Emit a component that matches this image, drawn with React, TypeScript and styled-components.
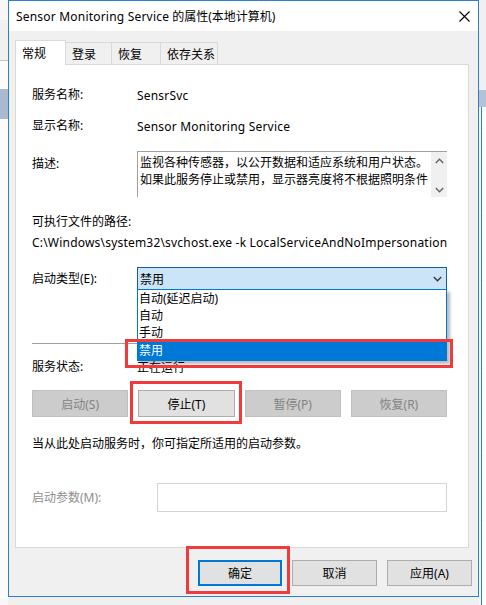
import React from 'react'
import styled, { createGlobalStyle } from 'styled-components'

const GlobalStyle = createGlobalStyle`
  html, body {
    margin: 0;
    padding: 0;
    background: #f0f0f0;
  }
  body {
    font-family: "Noto Sans", "Noto Sans CJK SC", sans-serif;
    font-size: 12px;
    color: #000;
  }
`

const Desktop = styled.div`
  display: flex;
  width: 486px;
  height: 605px;
  overflow: hidden;
  background: #f0f0f0;
`

const Strip = styled.div<{ $w?: number }>`
  display: flex;
  flex-direction: column;
  width: ${p => (p.$w ? `${p.$w}px` : 'auto')};
  flex: ${p => (p.$w ? 'none' : '1')};
  background: #f7f7f7;
  overflow: hidden;
`

const StripPart = styled.div<{ $h: number; $bg: string; $line?: boolean }>`
  height: ${p => p.$h}px;
  flex-shrink: 0;
  background: ${p => p.$bg};
  border-bottom: ${p => (p.$line ? '1px solid #c8c8c8' : 'none')};
`

const ListRows = styled.div`
  display: flex;
  flex-direction: column;
  background: #fff;
  flex: 1;
  border-left: 1px solid #2b7fd0;
  margin-left: 2px;
`

const ListCell = styled.div`
  height: 21.8px;
  flex-shrink: 0;
  border-bottom: 1px solid #fafafa;
  box-sizing: border-box;
`

const Window = styled.div`
  position: relative;
  width: 471px;
  height: 597px;
  box-sizing: border-box;
  border: 1px solid #2b7fd0;
  background: #f0f0f0;
  display: flex;
  flex-direction: column;
  flex-shrink: 0;
`

const TitleBar = styled.div`
  height: 30px;
  background: #fff;
  display: flex;
  align-items: center;
  justify-content: space-between;
  padding-left: 7px;
`

const Title = styled.div`
  font-size: 12px;
  white-space: nowrap;
`

const Latin = styled.span`
  letter-spacing: 0.2px;
`

const CloseBox = styled.div`
  width: 28px;
  height: 30px;
  display: flex;
  align-items: center;
  justify-content: center;
`

const Body = styled.div`
  flex: 1;
  display: flex;
  flex-direction: column;
  padding: 9px 8px 0 6px;
`

const TabRow = styled.div`
  display: flex;
  align-items: flex-end;
  height: 24px;
`

const Tab = styled.div<{ $active?: boolean; $w: number }>`
  position: relative;
  z-index: ${p => (p.$active ? 2 : 1)};
  box-sizing: border-box;
  width: ${p => p.$w}px;
  height: ${p => (p.$active ? 25 : 22)}px;
  margin-bottom: ${p => (p.$active ? -1 : 0)}px;
  margin-left: ${p => (p.$active ? 0 : -1)}px;
  padding-left: 6px;
  background: ${p => (p.$active ? '#fff' : '#f0f0f0')};
  border: 1px solid #d9d9d9;
  border-bottom: none;
  display: flex;
  align-items: center;
`

const Panel = styled.div`
  position: relative;
  width: 454px;
  height: 484px;
  box-sizing: border-box;
  border: 1px solid #d9d9d9;
  background: #fff;
  padding: 0 21px 0 16px;
  display: flex;
  flex-direction: column;
`

const Row = styled.div<{ $mt: number; $h: number; $top?: boolean }>`
  display: flex;
  align-items: ${p => (p.$top ? 'flex-start' : 'center')};
  margin-top: ${p => p.$mt}px;
  height: ${p => p.$h}px;
  white-space: nowrap;
`

const Label = styled.div<{ $w?: number; $muted?: boolean; $pt?: number }>`
  width: ${p => p.$w ?? 105}px;
  flex-shrink: 0;
  color: ${p => (p.$muted ? '#8d8d8d' : '#000')};
  padding-top: ${p => p.$pt ?? 0}px;
  line-height: 18px;
`

const DescBox = styled.div`
  width: 310px;
  height: 46px;
  box-sizing: border-box;
  border-top: 1px solid #a0a0a0;
  border-left: 1px solid #a0a0a0;
  display: flex;
`

const DescText = styled.div`
  flex: 1;
  padding: 2px 0 0 2px;
  line-height: 17px;
  overflow: hidden;
`

const ScrollBar = styled.div`
  width: 16px;
  background: #f0f0f0;
  display: flex;
  flex-direction: column;
  justify-content: space-between;
  align-items: center;
  padding: 6px 0 4px;
`

const SelectWrap = styled.div`
  position: relative;
  width: 310px;
  height: 23px;
  box-sizing: border-box;
  border: 1px solid #0a5fa8;
  background: #cce4f7;
  display: flex;
  align-items: center;
  justify-content: space-between;
  padding: 0 4px 0 2px;
`

const Dropdown = styled.div`
  position: absolute;
  left: -1px;
  right: -1px;
  top: 21px;
  box-sizing: border-box;
  border: 1px solid #0078d7;
  background: #fff;
  box-shadow: 3px 3px 3px rgba(0, 0, 0, 0.28);
  z-index: 5;
`

const Option = styled.div<{ $selected?: boolean }>`
  height: ${p => (p.$selected ? 19 : 17)}px;
  line-height: ${p => (p.$selected ? 19 : 17)}px;
  padding-left: 1px;
  background: ${p => (p.$selected ? '#0078d7' : 'transparent')};
  color: ${p => (p.$selected ? '#fff' : '#000')};
`

const Separator = styled.div<{ $mt: number }>`
  margin-top: ${p => p.$mt}px;
  height: 1px;
  background: #a0a0a0;
`

const ButtonGrid = styled.div`
  display: grid;
  grid-template-columns: repeat(4, 1fr);
  column-gap: 10px;
  margin-top: 14px;
  height: 27px;
`

const PushButton = styled.div<{ $disabled?: boolean; $primary?: boolean; $w?: number }>`
  box-sizing: border-box;
  width: ${p => (p.$w ? `${p.$w}px` : 'auto')};
  height: 100%;
  display: flex;
  align-items: center;
  justify-content: center;
  background: ${p => (p.$disabled ? '#cccccc' : '#e1e1e1')};
  color: ${p => (p.$disabled ? '#838383' : '#000')};
  border: ${p =>
    p.$primary ? '2px solid #0078d7' : p.$disabled ? '1px solid #bfbfbf' : '1px solid #adadad'};
`

const ParamInput = styled.div`
  width: 290px;
  height: 29px;
  box-sizing: border-box;
  border: 1px solid #d4d4d4;
  background: #fff;
`

const ButtonBar = styled.div`
  display: flex;
  justify-content: flex-end;
  gap: 10px;
  margin-top: 12px;
  margin-right: -2px;
  height: 26px;
`

const Mark = styled.div<{ $x: number; $y: number; $w: number; $h: number }>`
  position: absolute;
  left: ${p => p.$x}px;
  top: ${p => p.$y}px;
  width: ${p => p.$w}px;
  height: ${p => p.$h}px;
  box-sizing: border-box;
  border: 3px solid #ef3b3b;
  z-index: 10;
  pointer-events: none;
`

const Chevron = ({ up, color = '#333' }: { up?: boolean; color?: string }) => (
  <svg width="9" height="6" viewBox="0 0 9 6">
    <path
      d={up ? 'M0.8 5 L4.5 1.2 L8.2 5' : 'M0.8 1 L4.5 4.8 L8.2 1'}
      fill="none"
      stroke={color}
      strokeWidth="1.3"
    />
  </svg>
)

const CloseIcon = () => (
  <svg width="11" height="11" viewBox="0 0 11 11">
    <path d="M0.5 0.5 L10.5 10.5 M10.5 0.5 L0.5 10.5" stroke="#000" strokeWidth="1.1" />
  </svg>
)

export default function App() {
  const rightRows = Array.from({ length: 22 }, (_, i) => i)

  return (
    <>
      <GlobalStyle />
      <Desktop>
        <Strip $w={8}>
          <StripPart $h={20} $bg="#f7f7f7" />
          <StripPart $h={40} $bg="#f0f0f0" $line />
          <StripPart $h={28} $bg="#fbfbfb" />
          <StripPart $h={30} $bg="#a9bad0" />
          <StripPart $h={480} $bg="#fbfbfb" />
        </Strip>

        <Window>
          <TitleBar>
            <Title>
              <Latin>Sensor Monitoring Service</Latin> 的属性(本地计算机)
            </Title>
            <CloseBox>
              <CloseIcon />
            </CloseBox>
          </TitleBar>

          <Body>
            <TabRow>
              <Tab $active $w={51}>常规</Tab>
              <Tab $w={47}>登录</Tab>
              <Tab $w={50}>恢复</Tab>
              <Tab $w={58}>依存关系</Tab>
            </TabRow>

            <Panel>
              <Row $mt={21} $h={18}>
                <Label>服务名称:</Label>
                <Latin>SensrSvc</Latin>
              </Row>
              <Row $mt={13} $h={18}>
                <Label>显示名称:</Label>
                <Latin>Sensor Monitoring Service</Latin>
              </Row>
              <Row $mt={16} $h={46} $top>
                <Label $pt={4}>描述:</Label>
                <DescBox>
                  <DescText>
                    监视各种传感器，以公开数据和适应系统和用户状态。
                    <br />
                    如果此服务停止或禁用，显示器亮度将不根据照明条件
                  </DescText>
                  <ScrollBar>
                    <Chevron up color="#606060" />
                    <Chevron color="#606060" />
                  </ScrollBar>
                </DescBox>
              </Row>
              <Row $mt={16} $h={18}>
                <Label $w={200}>可执行文件的路径:</Label>
              </Row>
              <Row $mt={2} $h={18}>
                <Latin>C:\Windows\system32\svchost.exe -k LocalServiceAndNoImpersonation</Latin>
              </Row>
              <Row $mt={16} $h={23}>
                <Label>启动类型(E):</Label>
                <SelectWrap>
                  <span>禁用</span>
                  <Chevron />
                  <Dropdown>
                    <Option>自动(延迟启动)</Option>
                    <Option>自动</Option>
                    <Option>手动</Option>
                    <Option $selected>禁用</Option>
                  </Dropdown>
                </SelectWrap>
              </Row>
              <Separator $mt={53} />
              <Row $mt={14} $h={18}>
                <Label>服务状态:</Label>
                <span>正在运行</span>
              </Row>
              <ButtonGrid>
                <PushButton $disabled>启动(S)</PushButton>
                <PushButton>停止(T)</PushButton>
                <PushButton $disabled>暂停(P)</PushButton>
                <PushButton $disabled>恢复(R)</PushButton>
              </ButtonGrid>
              <Row $mt={17} $h={18}>
                <span>当从此处启动服务时，你可指定所适用的启动参数。</span>
              </Row>
              <Row $mt={31} $h={29}>
                <Label $w={125} $muted>启动参数(M):</Label>
                <ParamInput />
              </Row>
            </Panel>

            <ButtonBar>
              <PushButton $primary $w={84}>确定</PushButton>
              <PushButton $w={85}>取消</PushButton>
              <PushButton $w={85}>应用(A)</PushButton>
            </ButtonBar>
          </Body>

          <Mark $x={116} $y={338} $w={328} $h={29} />
          <Mark $x={121} $y={380} $w={112} $h={43} />
          <Mark $x={177} $y={545} $w={104} $h={48} />
        </Window>

        <Strip>
          <StripPart $h={90} $bg="#f0f0f0" />
          <StripPart $h={17} $bg="#b3c3d6" />
          <ListRows>
            {rightRows.map(i => (
              <ListCell key={i} />
            ))}
          </ListRows>
        </Strip>
      </Desktop>
    </>
  )
}
